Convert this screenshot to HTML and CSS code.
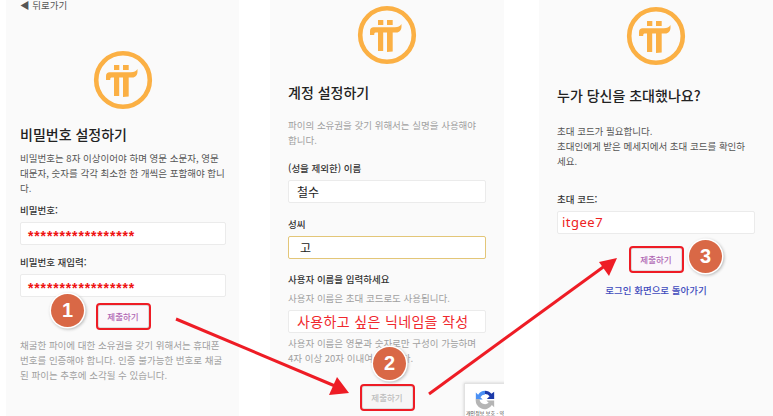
FILE: index.html
```html
<!DOCTYPE html>
<html lang="ko">
<head>
<meta charset="utf-8">
<title>Pi</title>
<link rel="stylesheet" href="styles.css">
</head>
<body>
<svg width="0" height="0" class="defs">
  <symbol id="pi" viewBox="0 0 60 60">
    <circle cx="30" cy="30" r="26.8" fill="none" stroke="#fbb044" stroke-width="4.6"/>
    <path fill="#fbb044" d="M21 15h5.300v5H21zM30 15h5.700v5H30zM13 26c0-2.500 1.500-3.700 3.500-3.700H38c3 0 5-1 6.500-3.300v2.500c0 3.500-2 6-5.200 6h-3.600V46.500l-5.700.6V27.500h-3.800v18.500H21V27.500h-2.500c-1 0-1.300 1-1.300 2.500H13z"/>
  </symbol>
</svg>
<main class="page">
  <section class="panel panel-a">
    <a class="back">◀ 뒤로가기</a>
    <svg class="logo logo-a"><use href="#pi"/></svg>
    <h1 class="title title-a">비밀번호 설정하기</h1>
    <p class="text dark">비밀번호는 8자 이상이어야 하며 영문 소문자, 영문 대문자, 숫자를 각각 최소한 한 개씩은 포함해야 합니다.</p>
    <label class="label label-a">비밀번호:</label>
    <div class="input stars">*****************</div>
    <label class="label label-b">비밀번호 재입력:</label>
    <div class="input stars">*****************</div>
    <div class="btn-row btn-row-a"><button class="btn">제출하기</button></div>
    <p class="text pale note">채굴한 파이에 대한 소유권을 갖기 위해서는 휴대폰 번호를 인증해야 합니다. 인증 불가능한 번호로 채굴된 파이는 추후에 소각될 수 있습니다.</p>
  </section>

  <section class="panel panel-b">
    <svg class="logo logo-b"><use href="#pi"/></svg>
    <h1 class="title title-b">계정 설정하기</h1>
    <p class="text pale intro">파이의 소유권을 갖기 위해서는 실명을 사용해야 합니다.</p>
    <label class="label label-c">(성을 제외한) 이름</label>
    <div class="input filled">철수</div>
    <label class="label label-d">성씨</label>
    <div class="input filled focus">고</div>
    <label class="label label-f">사용자 이름을 입력하세요</label>
    <p class="text pale hint">사용자 이름은 초대 코드로도 사용됩니다.</p>
    <div class="input nick">사용하고 싶은 닉네임을 작성</div>
    <p class="text pale rule">사용자 이름은 영문과 숫자로만 구성이 가능하며 4자 이상 20자 이내여야 합니다.</p>
    <div class="btn-row btn-row-b"><button class="btn off">제출하기</button></div>
    <div class="captcha">
      <svg viewBox="0 0 24 24" class="captcha-icon">
        <path fill="#1c3aa9" d="M12 3a9 9 0 0 1 7 3.400L22 4v8h-8l3-3a6 6 0 0 0-5-2.500z"/>
        <path fill="#4a90f4" d="M12 3v4a5.500 5.500 0 0 0-5 3l2.500 2.500H2V5l2.500 2.300A9 9 0 0 1 12 3z"/>
        <path fill="#b5b5b5" d="M2 12h4a6 6 0 0 0 10 4l-2.500-2.500H22V21l-2.500-2.500A9.500 9.500 0 0 1 2 12z"/>
      </svg>
      <span class="captcha-text">개인정보 보호 - 약</span>
    </div>
  </section>

  <section class="panel panel-c">
    <svg class="logo logo-c"><use href="#pi"/></svg>
    <h1 class="title title-c">누가 당신을 초대했나요?</h1>
    <p class="text dark invite">초대 코드가 필요합니다.<br>초대인에게 받은 메세지에서 초대 코드를 확인하세요.</p>
    <label class="label label-e">초대 코드:</label>
    <div class="input code">itgee7</div>
    <div class="btn-row btn-row-c"><button class="btn">제출하기</button></div>
    <a class="link">로그인 화면으로 돌아가기</a>
  </section>

  <svg class="arrows" viewBox="0 0 773 416" width="773" height="416">
    <path d="M176 319 335 386" stroke="#ee1c25" stroke-width="3" fill="none"/>
    <path d="M349 393 329 395 337 377z" fill="#ee1c25"/>
    <path d="M429 394 606 265" stroke="#ee1c25" stroke-width="3" fill="none"/>
    <path d="M617 258 599 262 609 276z" fill="#ee1c25"/>
  </svg>
  <div class="badge badge-1">1</div>
  <div class="badge badge-2">2</div>
  <div class="badge badge-3">3</div>
</main>
</body>
</html>
```
FILE: styles.css
```css
* { box-sizing: border-box; }
html, body { margin: 0; padding: 0; background: #fff; }
body { width: 773px; height: 416px; overflow: hidden; font-family: "Noto Sans CJK KR", "Noto Sans", sans-serif; color: #333; }
.defs { position: absolute; }
.page { position: relative; width: 773px; height: 416px; display: flex; overflow: hidden; }

.panel { position: relative; height: 416px; background: #fafafa; flex: none; display: flex; flex-direction: column; overflow: hidden; }
.panel-a { width: 233px; margin-left: 6px; padding: 0 13px 0 14px; }
.panel-b { width: 234px; margin-left: 31px; padding: 0 18px; }
.panel-c { width: 234px; margin-left: 35px; padding: 0 18px; }

.back { font-size: 9.500px; line-height: 10px; color: #555; height: 10px; }
.logo { display: block; width: 60px; height: 60px; flex: none; align-self: center; }
.logo-a { margin-top: 40px; }
.logo-b { margin-top: 5px; }
.logo-c { margin-top: 6px; }

.title { margin: 0; font-size: 14px; line-height: 20px; font-weight: 500; color: #222; white-space: nowrap; }
.title-a { margin-top: 14px; }
.title-b { margin-top: 17px; }
.title-c { margin-top: 19px; }

.text { margin: 0; font-size: 9.500px; line-height: 15px; }
.dark { color: #555; }
.pale { color: #a0a0a0; }
.panel-a .dark { margin-top: 7px; }
.note { margin-top: 7px; }
.intro { margin-top: 16px; }
.hint { margin-top: 5px; }
.rule { margin-top: 3px; max-width: 190px; }
.invite { margin-top: 19px; max-width: 192px; }

.label { display: block; font-size: 9.500px; line-height: 14px; font-weight: 500; color: #333; }
.label-a { margin-top: 7px; }
.label-b { margin-top: 10px; }
.label-c { margin-top: 13px; }
.label-d { margin-top: 14px; }
.label-f { margin-top: 13px; }
.label-e { margin-top: 23px; }

.input { height: 23px; margin-top: 5px; background: #fff; border: 1px solid #ebebeb; border-radius: 2px; padding: 0 8px; line-height: 21px; flex: none; white-space: nowrap; overflow: hidden; }
.stars { color: #ee1111; font-size: 14px; font-weight: 700; letter-spacing: 0.850px; font-family: "Liberation Sans", sans-serif; line-height: 27px; padding-left: 7px; }
.filled { font-size: 12px; color: #222; }
.focus { border-color: #e3c678; padding-left: 11px; }
.nick { color: #f0282d; font-size: 14px; letter-spacing: 0.350px; margin-top: 4px; }
.code { color: #ee2222; font-size: 13px; letter-spacing: 0.500px; padding-left: 4px; font-family: "Noto Sans", sans-serif; }

.btn-row { display: flex; justify-content: center; flex: none; }
.btn-row-a { margin-top: 6px; }
.btn-row-b { margin-top: 18px; }
.btn-row-c { margin-top: 12px; }
.btn { width: 55px; height: 27px; padding: 0; background: #fbf7fb; border: 2px solid #ee1c25; border-radius: 4px; color: #b067b4; font: 500 8.500px/23px "Noto Sans CJK KR", sans-serif; box-shadow: inset 0 0 0 1px #ddd; }
.btn-row-a + .note { margin-top: 8px; }
.btn.off { color: #bdbdbd; background: #f6f6f6; }
.link { margin-top: 10px; font-size: 9.500px; line-height: 14px; color: #3f4bbd; text-align: center; font-weight: 500; }

.captcha { position: absolute; left: 194px; top: 383px; width: 60px; height: 40px; background: #fff; border: 1px solid #e2e2e2; box-shadow: 0 0 3px #ccc; display: flex; flex-direction: column; }
.captcha-icon { width: 22px; height: 22px; margin: 4px 0 0 9px; flex: none; }
.captcha-text { font-size: 5px; line-height: 6px; margin-left: 1px; white-space: nowrap; color: #444; }

.arrows { position: absolute; left: 0; top: 0; pointer-events: none; }
.badge { position: absolute; width: 33px; height: 33px; border-radius: 50%; background: #d96846; color: #fff; font: 700 20px/33px "Liberation Sans", sans-serif; text-align: center; box-shadow: 0 0 0 1.500px #fff, 1px 1px 3px 1.500px #bbb; }
.badge-1 { left: 51px; top: 294px; }
.badge-2 { left: 373px; top: 347px; }
.badge-3 { left: 689px; top: 240px; }
```
